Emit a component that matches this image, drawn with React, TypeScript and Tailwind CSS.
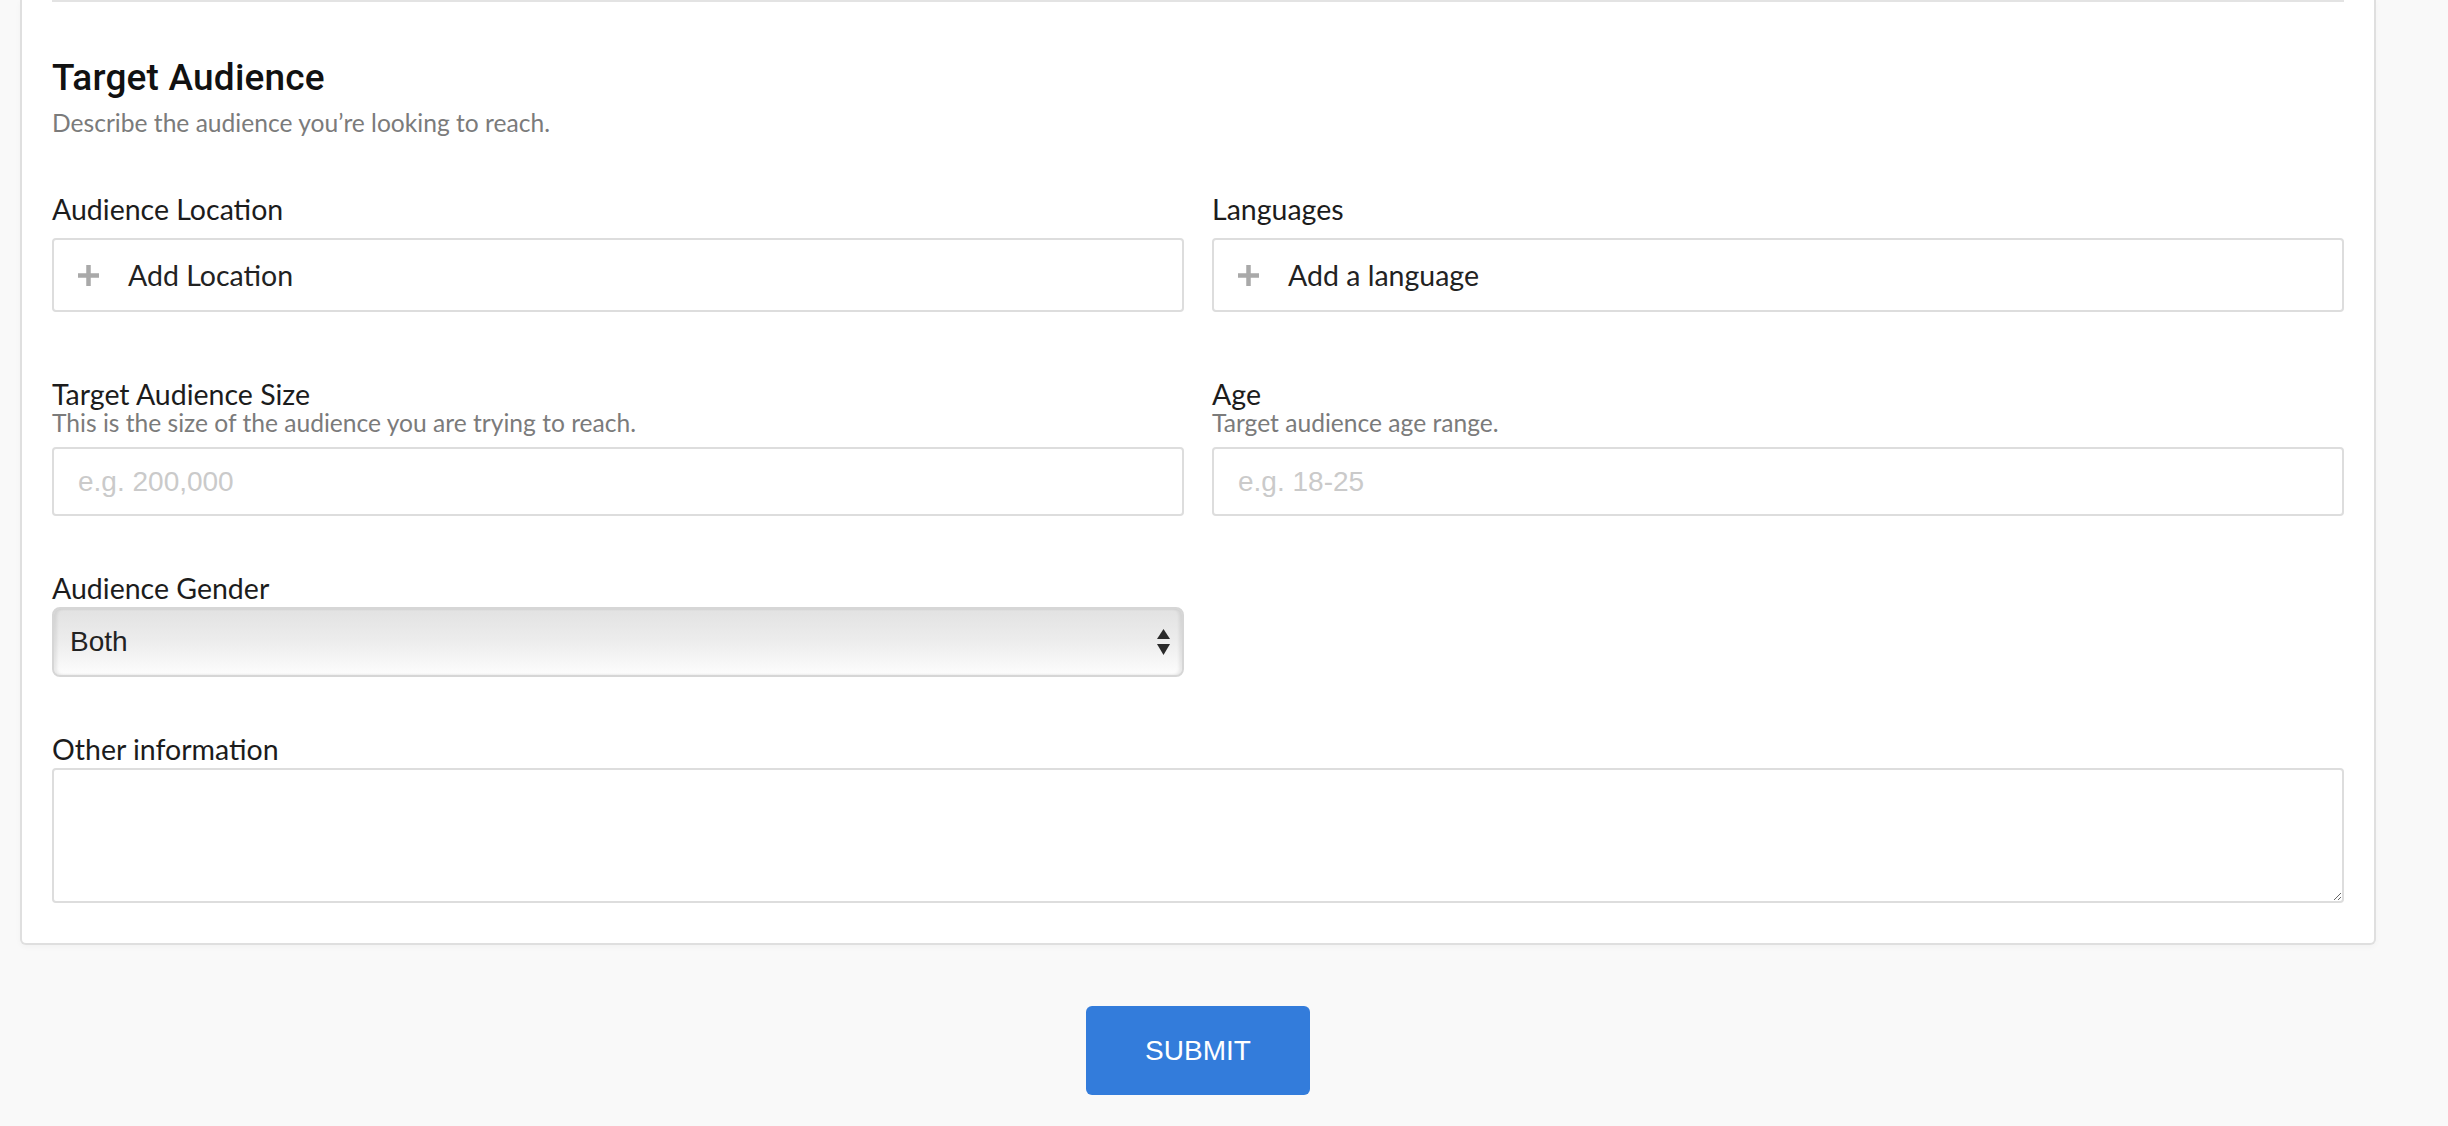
import React from 'react'

const lato = { fontFamily: 'Lato, "Open Sans", sans-serif' }

const PlusIcon = () => (
  <svg width="21" height="21" viewBox="0 0 21 21" className="shrink-0">
    <rect x="8.25" y="0" width="4.5" height="21" fill="#a9a9a9" />
    <rect x="0" y="8.25" width="21" height="4.5" fill="#a9a9a9" />
  </svg>
)

const AddField = ({ text }: { text: string }) => (
  <button
    type="button"
    className="mt-[13px] flex h-[74px] w-full items-center rounded-[4px] border-2 border-[#dddddd] bg-white pl-[24px] text-left"
  >
    <PlusIcon />
    <span className="ml-[29px] text-[28.5px] leading-[32px] text-[#222222] font-['Lato']">{text}</span>
  </button>
)

const TextField = ({ placeholder }: { placeholder: string }) => (
  <input
    type="text"
    placeholder={placeholder}
    className="mt-[10px] block h-[69px] w-full rounded-[4px] border-2 border-[#dddddd] bg-white px-[24px] text-[28px] text-[#222222] font-['Liberation_Sans'] outline-none placeholder:text-[#cacaca]"
  />
)

const Label = ({ children }: { children: React.ReactNode }) => (
  <div className="text-[28.5px] leading-[32px] text-[#1c1c1c]" style={lato}>{children}</div>
)

const Helper = ({ children }: { children: React.ReactNode }) => (
  <div className="mt-[-1px] text-[24.6px] leading-[28px] text-[#7b7b7b]" style={lato}>{children}</div>
)

const App = () => {
  return (
    <div className="min-h-screen bg-[#f9f9f9]">
      <div className="ml-[20px] w-[2356px]">
        <section className="rounded-b-[6px] border-2 border-t-0 border-[#dfdfdf] bg-white px-[30px] pb-[40px] shadow-[0_2px_6px_rgba(0,0,0,0.03)]">
          <div className="h-[2px] bg-[#e3e3e3]" />

          <h2 className="mt-[54px] text-[37px] leading-[44px] font-medium tracking-[0.2px] text-[#111111] font-['Roboto']">
            Target Audience
          </h2>
          <p className="mt-[9px] text-[24.6px] leading-[28px] text-[#7b7b7b]" style={lato}>
            Describe the audience you’re looking to reach.
          </p>

          <div className="mt-[56px] grid grid-cols-2 gap-x-[28px]">
            <div>
              <Label>Audience Location</Label>
              <AddField text="Add Location" />
            </div>
            <div>
              <Label>Languages</Label>
              <AddField text="Add a language" />
            </div>
          </div>

          <div className="mt-[66px] grid grid-cols-2 gap-x-[28px]">
            <div>
              <Label>Target Audience Size</Label>
              <Helper>This is the size of the audience you are trying to reach.</Helper>
              <TextField placeholder="e.g. 200,000" />
            </div>
            <div>
              <Label>Age</Label>
              <Helper>Target audience age range.</Helper>
              <TextField placeholder="e.g. 18-25" />
            </div>
          </div>

          <div className="mt-[56px] grid grid-cols-2 gap-x-[28px]">
            <div>
              <Label>Audience Gender</Label>
              <div className="mt-[3px] flex h-[70px] items-center justify-between rounded-[8px] border-2 border-[#d6d6d6] bg-gradient-to-b from-[#e2e2e2] via-[#ededed] to-[#fdfdfd] pl-[16px] pr-[12px] shadow-[inset_3px_0_3px_rgba(0,0,0,0.07),inset_-3px_0_3px_rgba(0,0,0,0.07)]">
                <span className="text-[28px] leading-[32px] text-[#222222] font-['Liberation_Sans']">Both</span>
                <svg width="13" height="27" viewBox="0 0 13 27">
                  <path d="M6.5 0 L13 10 L0 10 Z" fill="#2a2a2a" />
                  <path d="M0 15 L13 15 L6.5 26 Z" fill="#2a2a2a" />
                </svg>
              </div>
            </div>
            <div />
          </div>

          <div className="mt-[56px]">
            <Label>Other information</Label>
            <textarea className="mt-[3px] block h-[135px] w-full rounded-[4px] border-2 border-[#dddddd] bg-white px-[16px] py-[10px] text-[26px] outline-none" />
          </div>
        </section>

        <div className="flex justify-center pt-[61px] pb-[40px]">
          <button
            type="button"
            className="h-[89px] w-[224px] rounded-[6px] bg-[#337cdb] text-[28px] text-white font-['Liberation_Sans']"
          >
            SUBMIT
          </button>
        </div>
      </div>
    </div>
  )
}

export default App
